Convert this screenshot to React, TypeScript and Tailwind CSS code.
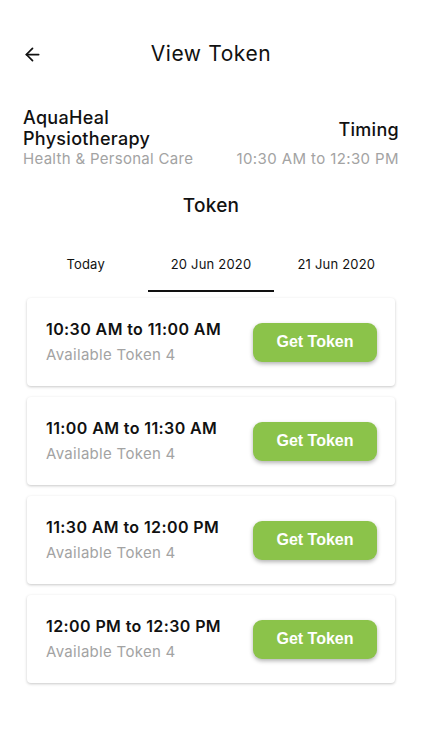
import { ArrowLeft } from 'lucide-react';

const slots = [
  '10:30 AM to 11:00 AM',
  '11:00 AM to 11:30 AM',
  '11:30 AM to 12:00 PM',
  '12:00 PM to 12:30 PM',
];

export default function App() {
  return (
    <div className="min-h-[750px] bg-white text-[#111] font-['Inter',sans-serif]">
      <div className="relative flex items-center h-[56px] pt-[26px] box-content">
        <ArrowLeft className="absolute left-[22px] top-[44px] w-[21px] h-[21px]" strokeWidth={2} />
        <h1 className="w-full text-center text-[21px] tracking-[0.6px]">View Token</h1>
      </div>

      <div className="flex justify-between items-end px-[23px] pt-[25px]">
        <div>
          <div className="text-[18px] leading-[21px] font-medium tracking-[0.3px]">AquaHeal<br />Physiotherapy</div>
          <div className="text-[15px] leading-[20px] text-[#a3a3a3] tracking-[0.3px]">Health &amp; Personal Care</div>
        </div>
        <div className="text-right">
          <div className="text-[18px] leading-[21px] font-medium mb-[9px] tracking-[0.3px]">Timing</div>
          <div className="text-[15px] leading-[20px] text-[#a3a3a3] tracking-[0.4px]">10:30 AM to 12:30 PM</div>
        </div>
      </div>

      <h2 className="text-center text-[19px] font-medium mt-[23px] tracking-[0.3px]">Token</h2>

      <div className="grid grid-cols-3 px-[23px] mt-[34px] text-[13px] tracking-[0.2px]">
        <div className="text-center pb-[16px]">Today</div>
        <div className="text-center pb-[16px] border-b-2 border-[#111]">20 Jun 2020</div>
        <div className="text-center pb-[16px]">21 Jun 2020</div>
      </div>

      <div className="flex flex-col gap-[11px] px-[27px] pt-[6px]">
        {slots.map((s) => (
          <div
            key={s}
            className="flex items-center justify-between h-[88px] pl-[19px] pr-[18px] rounded-[4px] bg-white shadow-[0_1px_3px_rgba(0,0,0,0.22)]"
          >
            <div>
              <div className="text-[16px] font-semibold leading-[20px] tracking-[0.4px]">{s}</div>
              <div className="text-[15px] leading-[20px] mt-[6px] text-[#a3a3a3] tracking-[0.3px]">Available Token 4</div>
            </div>
            <button className="w-[124px] h-[39px] rounded-[9px] bg-[#8bc34a] text-white text-[16px] font-bold shadow-[0_2px_4px_rgba(0,0,0,0.3)] font-['Liberation_Sans',sans-serif]">
              Get Token
            </button>
          </div>
        ))}
      </div>
    </div>
  );
}
